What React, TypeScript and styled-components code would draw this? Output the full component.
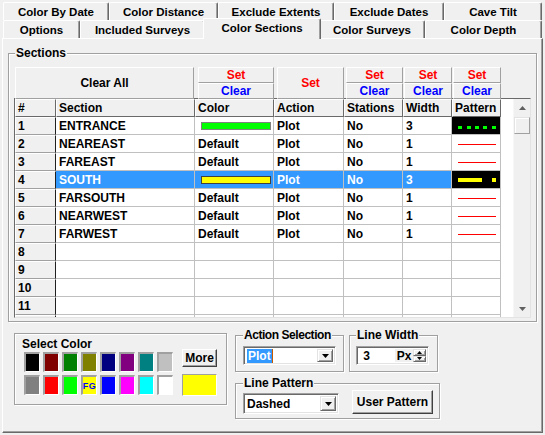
import React from 'react';
import styled, { createGlobalStyle, css } from 'styled-components';

const GlobalStyle = createGlobalStyle`
  html, body {
    margin: 0;
    padding: 0;
    background: #f0f0f0;
  }
  body {
    font-family: "Liberation Sans", Arial, sans-serif;
    font-size: 12px;
    font-weight: bold;
    color: #000;
  }
  * {
    box-sizing: border-box;
  }
`;

const COLS = '41px 139px 79px 70px 59px 49px 49px';

const Window = styled.div`
  width: 545px;
  height: 435px;
  padding: 2px;
  display: flex;
  flex-direction: column;
  background: #f0f0f0;
`;

const TabRow = styled.div`
  display: flex;
  height: 18px;
  margin-left: 1px;
  flex: none;
`;

const Tab = styled.div<{ $w: number; $active?: boolean }>`
  width: ${p => p.$w}px;
  flex: none;
  display: flex;
  align-items: center;
  justify-content: center;
  font-size: 11.5px;
  white-space: nowrap;
  background: #f0f0f0;
  border-top: 1px solid #fff;
  border-left: 1px solid #fff;
  border-right: 1px solid #696969;
  box-shadow: inset -1px 0 #a0a0a0;
  border-radius: 2px 2px 0 0;
  ${p => p.$active && css`
    width: ${p.$w + 4}px;
    margin: -2px -2px -1px;
    padding-bottom: 3px;
    position: relative;
    z-index: 1;
  `}
`;

const Panel = styled.div`
  flex: 1;
  display: flex;
  flex-direction: column;
  border-top: 1px solid #fff;
  border-left: 1px solid #fff;
  border-right: 1px solid #696969;
  border-bottom: 1px solid #696969;
  box-shadow: inset -1px -1px #a0a0a0;
  padding: 8px 5px 0 5px;
`;

const GroupBox = styled.fieldset<{ $w?: number; $pad: string }>`
  margin: 0;
  min-width: 0;
  ${p => p.$w && css`width: ${p.$w}px;`}
  border: 1px solid #a0a0a0;
  box-shadow: inset 1px 1px #fff, 1px 1px #fff;
  padding: ${p => p.$pad};
`;

const Legend = styled.legend<{ $tight?: boolean; $ml?: number }>`
  padding: 0 1px;
  margin-left: ${p => p.$ml ?? 0}px;
  line-height: 13px;
  background: #f0f0f0;
  white-space: nowrap;
  ${p => p.$tight && css`letter-spacing: -0.45px;`}
`;

const ButtonRow = styled.div`
  display: grid;
  grid-template-columns: ${COLS};
  height: 30px;
  margin: 0 0 1px 1px;
`;

const RaisedButton = styled.div<{ $color?: string }>`
  display: flex;
  align-items: center;
  justify-content: center;
  flex: 1;
  background: #f0f0f0;
  color: ${p => p.$color ?? '#000'};
  border-top: 1px solid #fff;
  border-left: 1px solid #fff;
  border-right: 1px solid #a0a0a0;
  border-bottom: 1px solid #a0a0a0;
`;

const ClearAllButton = styled(RaisedButton)`
  grid-column: span 2;
  margin-right: 1px;
`;

const ButtonStack = styled.div<{ $ml: number }>`
  display: flex;
  flex-direction: column;
  margin-left: ${p => p.$ml}px;
`;

const GridFrame = styled.div`
  display: flex;
  height: 220px;
  background: #fff;
  border-top: 1px solid #696969;
  border-left: 1px solid #696969;
  border-right: 1px solid #e3e3e3;
  border-bottom: 1px solid #e3e3e3;
  overflow: hidden;
`;

const Table = styled.div`
  width: 486px;
  flex: none;
  display: flex;
  flex-direction: column;
`;

const Row = styled.div`
  display: grid;
  grid-template-columns: ${COLS};
  height: 18px;
  flex: none;
`;

const HeadCell = styled.div<{ $num?: boolean }>`
  background: #f0f0f0;
  border-top: 1px solid #fff;
  border-left: 1px solid #fff;
  border-right: 1px solid ${p => (p.$num ? '#202020' : '#696969')};
  border-bottom: 1px solid ${p => (p.$num ? '#a0a0a0' : '#696969')};
  padding-left: 2px;
  line-height: 16px;
  white-space: nowrap;
  overflow: hidden;
`;

const Cell = styled.div<{ $sel?: boolean; $dark?: boolean; $flush?: boolean }>`
  background: ${p => (p.$dark ? '#000' : p.$sel ? '#3399ff' : '#fff')};
  color: ${p => (p.$sel ? '#fff' : '#000')};
  border-right: 1px solid #c0c0c0;
  border-bottom: 1px solid #c0c0c0;
  padding-left: ${p => (p.$flush ? 0 : 3)}px;
  display: flex;
  align-items: center;
  white-space: nowrap;
  overflow: hidden;
`;

const ColorBar = styled.div<{ $c: string; $edge: string }>`
  width: 70px;
  height: 8px;
  margin-left: 3px;
  background: ${p => p.$c};
  border: 1px solid ${p => p.$edge};
`;

const PatternSvg = styled.svg`
  display: block;
`;

const GridSpacer = styled.div`
  flex: 1;
  background: #fff;
`;

const ScrollBar = styled.div`
  width: 17px;
  flex: none;
  display: flex;
  flex-direction: column;
  background: #f0f0f0;
  border-left: 1px solid #f7f7f7;
`;

const ScrollArrow = styled.div`
  height: 17px;
  flex: none;
  display: flex;
  align-items: center;
  justify-content: center;
`;

const ScrollThumb = styled.div`
  height: 17px;
  flex: none;
  margin: 1px 0 0;
  background: #f0f0f0;
  border-top: 1px solid #e3e3e3;
  border-left: 1px solid #e3e3e3;
  border-right: 1px solid #a0a0a0;
  border-bottom: 1px solid #a0a0a0;
  box-shadow: inset 1px 1px #fff;
`;

const ScrollTrack = styled.div`
  flex: 1;
`;

const ArrowSvg = styled.svg`
  display: block;
`;

const BottomRow = styled.div`
  display: flex;
  align-items: flex-start;
  gap: 8px;
  margin-top: 7px;
  padding-left: 6px;
`;

const ColorFrame = styled.div`
  width: 213px;
  height: 72px;
  margin-top: 4px;
  border: 1px solid #a0a0a0;
  box-shadow: inset 1px 1px #fff, 1px 1px #fff;
  padding: 4px 0 0 9px;
`;

const FrameLabel = styled.div`
  line-height: 13px;
  margin-left: -2px;
`;

const SwatchArea = styled.div`
  display: flex;
  align-items: flex-start;
  gap: 9px;
  margin-top: 1px;
`;

const SwatchGrid = styled.div`
  display: grid;
  grid-template-columns: repeat(8, 16px);
  grid-auto-rows: 20px;
  gap: 3px;
`;

const Swatch = styled.div<{ $c: string }>`
  background: ${p => p.$c};
  border-top: 2px solid #a0a0a0;
  border-left: 2px solid #a0a0a0;
  border-right: 1px solid #fff;
  border-bottom: 1px solid #fff;
  display: flex;
  align-items: center;
  justify-content: center;
  color: #0000ff;
  font-size: 9px;
  letter-spacing: 0.5px;
`;

const MoreColumn = styled.div`
  display: flex;
  flex-direction: column;
  gap: 7px;
  margin-top: -3px;
`;

const PushButton = styled.div<{ $w: number; $h: number }>`
  width: ${p => p.$w}px;
  height: ${p => p.$h}px;
  display: flex;
  align-items: center;
  justify-content: center;
  background: #f0f0f0;
  border-top: 1px solid #fff;
  border-left: 1px solid #fff;
  border-right: 1px solid #404040;
  border-bottom: 1px solid #404040;
  box-shadow: inset -1px -1px #a0a0a0;
  white-space: nowrap;
`;

const CurrentColor = styled.div`
  width: 35px;
  height: 22px;
  background: #ffff00;
  border-top: 1px solid #a0a0a0;
  border-left: 1px solid #a0a0a0;
  border-right: 1px solid #fff;
  border-bottom: 1px solid #fff;
`;

const RightColumn = styled.div`
  width: 205px;
  display: flex;
  flex-direction: column;
  gap: 5px;
`;

const PairRow = styled.div`
  display: flex;
  gap: 5px;
`;

const PatternRow = styled.div`
  display: flex;
  align-items: flex-end;
  gap: 13px;
`;

const Sunken = styled.div<{ $w: number; $h: number }>`
  width: ${p => p.$w}px;
  height: ${p => p.$h}px;
  display: flex;
  align-items: stretch;
  background: #fff;
  border-top: 1px solid #a0a0a0;
  border-left: 1px solid #a0a0a0;
  border-right: 1px solid #fff;
  border-bottom: 1px solid #fff;
  box-shadow: inset 1px 1px #696969, inset -1px -1px #e3e3e3;
  padding: 2px;
`;

const FieldText = styled.div`
  flex: 1;
  display: flex;
  align-items: center;
  padding-left: 1px;
`;

const Highlight = styled.span`
  background: #3399ff;
  color: #fff;
  padding: 0 1px;
  line-height: 14px;
`;

const Caret = styled.span`
  width: 1px;
  height: 14px;
  background: #c85a00;
`;

const DropButton = styled.div`
  width: 16px;
  flex: none;
  display: flex;
  align-items: center;
  justify-content: center;
  background: #f0f0f0;
  border-top: 1px solid #e3e3e3;
  border-left: 1px solid #e3e3e3;
  border-right: 1px solid #696969;
  border-bottom: 1px solid #696969;
  box-shadow: inset 1px 1px #fff, inset -1px -1px #a0a0a0;
`;

const UnitLabel = styled.div`
  width: 18px;
  flex: none;
  display: flex;
  align-items: center;
  justify-content: center;
  background: #f0f0f0;
`;

const Spinner = styled.div`
  width: 13px;
  flex: none;
  display: flex;
  flex-direction: column;
`;

const SpinButton = styled(DropButton)`
  width: 13px;
  flex: 1;
`;

const Arrow = ({ dir, w = 7, color = '#000' }: { dir: 'up' | 'down'; w?: number; color?: string }) => {
  const h = Math.ceil(w / 2);
  const pts = dir === 'down' ? `0,0 ${w},0 ${w / 2},${h}` : `0,${h} ${w},${h} ${w / 2},0`;
  return (
    <ArrowSvg width={w} height={h}>
      <polygon points={pts} fill={color} />
    </ArrowSvg>
  );
};

const Pattern = ({ kind }: { kind: string }) => (
  <PatternSvg width="48" height="17">
    {kind === 'solid' && <rect x="6" y="9" width="38" height="1" fill="#ff0000" />}
    {kind === 'dots' &&
      [6, 15, 23, 31, 40].map(x => <rect key={x} x={x} y="9" width="4" height="3" fill="#00ff00" />)}
    {kind === 'dash' && (
      <>
        <rect x="6" y="7" width="24" height="4" fill="#ffff00" />
        <rect x="40" y="7" width="4" height="4" fill="#ffff00" />
      </>
    )}
  </PatternSvg>
);

type Section = {
  name: string;
  color?: string;
  edge?: string;
  width: string;
  pattern: string;
  sel?: boolean;
};

const sections: Section[] = [
  { name: 'ENTRANCE', color: '#00ff00', edge: '#808080', width: '3', pattern: 'dots' },
  { name: 'NEAREAST', width: '1', pattern: 'solid' },
  { name: 'FAREAST', width: '1', pattern: 'solid' },
  { name: 'SOUTH', color: '#ffff00', edge: '#404040', width: '3', pattern: 'dash', sel: true },
  { name: 'FARSOUTH', width: '1', pattern: 'solid' },
  { name: 'NEARWEST', width: '1', pattern: 'solid' },
  { name: 'FARWEST', width: '1', pattern: 'solid' },
];

const swatches = [
  '#000000', '#800000', '#008000', '#808000', '#000080', '#800080', '#008080', '#c0c0c0',
  '#808080', '#ff0000', '#00ff00', '#ffff00', '#0000ff', '#ff00ff', '#00ffff', '#ffffff',
];

const backTabs: [string, number][] = [
  ['Color By Date', 106], ['Color Distance', 109], ['Exclude Extents', 116], ['Exclude Dates', 110], ['Cave Tilt', 98],
];
const frontTabs: [string, number][] = [
  ['Options', 77], ['Included Surveys', 125], ['Color Sections', 114], ['Color Surveys', 106], ['Color Depth', 117],
];

// rows below the data; the last one only shows as a sliver at the bottom edge
const emptyRows = ['8', '9', '10', '11', ''];

const SetClear = ({ ml }: { ml: number }) => (
  <ButtonStack $ml={ml}>
    <RaisedButton $color="#ff0000">Set</RaisedButton>
    <RaisedButton $color="#0000ff">Clear</RaisedButton>
  </ButtonStack>
);

export default function App() {
  return (
    <Window>
      <GlobalStyle />
      <TabRow>
        {backTabs.map(([t, w]) => (
          <Tab key={t} $w={w}>{t}</Tab>
        ))}
      </TabRow>
      <TabRow>
        {frontTabs.map(([t, w]) => (
          <Tab key={t} $w={w} $active={t === 'Color Sections'}>{t}</Tab>
        ))}
      </TabRow>
      <Panel>
        <GroupBox $pad="7px 5px 3px 5px">
          <Legend $ml={1}>Sections</Legend>
          <ButtonRow>
            <ClearAllButton>Clear All</ClearAllButton>
            <SetClear ml={3} />
            <ButtonStack $ml={3}>
              <RaisedButton $color="#ff0000">Set</RaisedButton>
            </ButtonStack>
            <SetClear ml={2} />
            <SetClear ml={1} />
            <SetClear ml={1} />
          </ButtonRow>
          <GridFrame>
            <Table>
              <Row>
                {['#', 'Section', 'Color', 'Action', 'Stations', 'Width', 'Pattern'].map(h => (
                  <HeadCell key={h}>{h}</HeadCell>
                ))}
              </Row>
              {sections.map((s, i) => (
                <Row key={s.name}>
                  <HeadCell $num>{i + 1}</HeadCell>
                  <Cell $sel={s.sel}>{s.name}</Cell>
                  <Cell $sel={s.sel}>
                    {s.color ? <ColorBar $c={s.color} $edge={s.edge ?? '#808080'} /> : 'Default'}
                  </Cell>
                  <Cell $sel={s.sel}>Plot</Cell>
                  <Cell $sel={s.sel}>No</Cell>
                  <Cell $sel={s.sel}>{s.width}</Cell>
                  <Cell $flush $dark={s.pattern !== 'solid'}>
                    <Pattern kind={s.pattern} />
                  </Cell>
                </Row>
              ))}
              {emptyRows.map((n, i) => (
                <Row key={i}>
                  <HeadCell $num>{n}</HeadCell>
                  <Cell />
                  <Cell />
                  <Cell />
                  <Cell />
                  <Cell />
                  <Cell />
                </Row>
              ))}
            </Table>
            <GridSpacer />
            <ScrollBar>
              <ScrollArrow>
                <Arrow dir="up" color="#606060" />
              </ScrollArrow>
              <ScrollThumb />
              <ScrollTrack />
              <ScrollArrow>
                <Arrow dir="down" color="#606060" />
              </ScrollArrow>
            </ScrollBar>
          </GridFrame>
        </GroupBox>
        <BottomRow>
          <ColorFrame>
            <FrameLabel>Select Color</FrameLabel>
            <SwatchArea>
              <SwatchGrid>
                {swatches.map((c, i) => (
                  <Swatch key={i} $c={c}>{i === 11 ? 'FG' : null}</Swatch>
                ))}
              </SwatchGrid>
              <MoreColumn>
                <PushButton $w={35} $h={18}>More</PushButton>
                <CurrentColor />
              </MoreColumn>
            </SwatchArea>
          </ColorFrame>
          <RightColumn>
            <PairRow>
              <GroupBox $w={109} $pad="4px 7px 6px 7px">
                <Legend $tight>Action Selection</Legend>
                <Sunken $w={93} $h={19}>
                  <FieldText>
                    <Highlight>Plot</Highlight>
                    <Caret />
                  </FieldText>
                  <DropButton>
                    <Arrow dir="down" />
                  </DropButton>
                </Sunken>
              </GroupBox>
              <GroupBox $w={89} $pad="4px 8px 6px 6px">
                <Legend>Line Width</Legend>
                <Sunken $w={73} $h={19}>
                  <FieldText>&nbsp;3</FieldText>
                  <UnitLabel>Px</UnitLabel>
                  <Spinner>
                    <SpinButton>
                      <Arrow dir="up" w={5} />
                    </SpinButton>
                    <SpinButton>
                      <Arrow dir="down" w={5} />
                    </SpinButton>
                  </Spinner>
                </Sunken>
              </GroupBox>
            </PairRow>
            <GroupBox $pad="0 6px 4px 7px">
              <Legend>Line Pattern</Legend>
              <PatternRow>
                <Sunken $w={96} $h={21}>
                  <FieldText>Dashed</FieldText>
                  <DropButton>
                    <Arrow dir="down" />
                  </DropButton>
                </Sunken>
                <PushButton $w={81} $h={24}>User Pattern</PushButton>
              </PatternRow>
            </GroupBox>
          </RightColumn>
        </BottomRow>
      </Panel>
    </Window>
  );
}
